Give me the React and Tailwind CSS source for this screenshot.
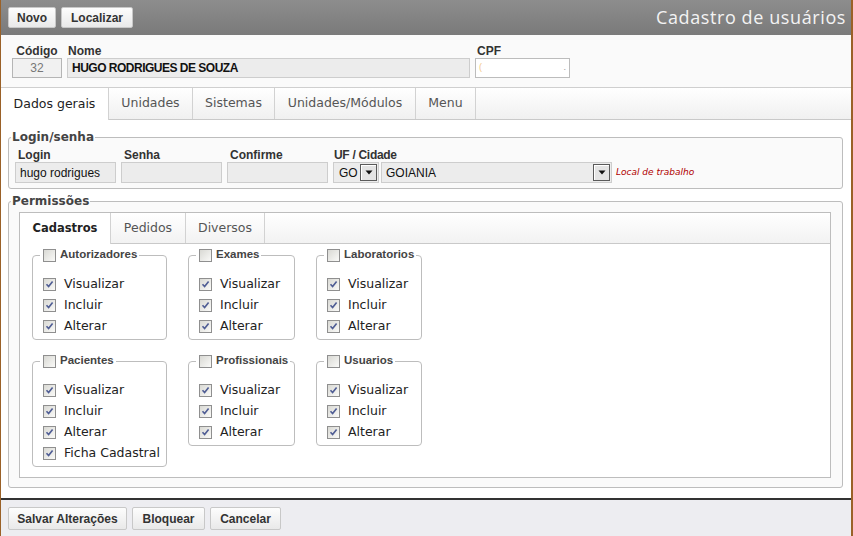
import React from "react";

const SANS = "font-['Liberation_Sans',Arial,sans-serif]";
const VERD = "font-['DejaVu_Sans',Verdana,sans-serif]";

function Box({ checked }) {
    return (
        <span className="flex h-[13px] w-[13px] shrink-0 items-center justify-center border border-[#8f8f8f] bg-gradient-to-br from-[#d9d9d4] to-[#fafaf8]">
            {checked && (
                <svg width="9" height="9" viewBox="0 0 9 9">
                    <path d="M1.5 4.2 L3.6 6.6 L7.6 1.4" stroke="#4f5d94" strokeWidth="1.6" fill="none" />
                </svg>
            )}
        </span>
    );
}

function Arrow() {
    return (
        <span className="flex h-[17px] w-[17px] shrink-0 items-center justify-center border border-[#5a5a5a] bg-[#e4e4e4] shadow-[inset_1px_1px_0_#fff]">
            <svg width="8" height="5" viewBox="0 0 8 5">
                <path d="M0.5 0.5 H7.5 L4 4.5 Z" fill="#111" />
            </svg>
        </span>
    );
}

function Btn({ children, w }) {
    return (
        <button
            className={`flex h-[21px] items-center justify-center rounded-[2px] border border-[#c8c8c8] bg-gradient-to-b from-[#fdfdfd] to-[#e9e9e9] text-[12px] font-bold text-[#333] ${SANS} ${w}`}
        >
            {children}
        </button>
    );
}

function Group({ title, items }) {
    return (
        <fieldset className="rounded-[4px] border border-[#bdbdbd] pb-[2px] pl-[7px]">
            <legend className="flex h-[14px] items-center gap-[4px] pl-[3px] pr-[2px]">
                <Box />
                <span className={`text-[11.5px] font-bold text-[#444] ${SANS}`}>{title}</span>
            </legend>
            <div className="mt-[12px] pl-[3px]">
                {items.map((it) => (
                    <div key={it} className="flex h-[21px] items-center gap-[8px]">
                        <Box checked />
                        <span className={`text-[12.5px] text-[#222] ${VERD}`}>{it}</span>
                    </div>
                ))}
            </div>
        </fieldset>
    );
}

const basic = ["Visualizar", "Incluir", "Alterar"];

export default function App() {
    const topTabs = [
        ["Dados gerais", "w-[108px]", true],
        ["Unidades", "w-[84px]"],
        ["Sistemas", "w-[82px]"],
        ["Unidades/Módulos", "w-[141px]"],
        ["Menu", "w-[60px]"],
    ];
    const permTabs = [
        ["Cadastros", "w-[91px]", true],
        ["Pedidos", "w-[75px]"],
        ["Diversos", "w-[79px]"],
    ];

    return (
        <div className={`flex h-[536px] w-[853px] flex-col overflow-hidden border-l border-r-2 border-[#9a6128] bg-white ${SANS}`}>
            {/* Header */}
            <div className="flex h-[35px] shrink-0 items-center gap-[5px] bg-gradient-to-b from-[#8d8d8d] to-[#7a7a7a] pl-[7px] pr-[5px]">
                <Btn w="w-[48px]">Novo</Btn>
                <Btn w="w-[72px]">Localizar</Btn>
                <span className="ml-auto font-['Open_Sans',sans-serif] text-[18px] tracking-[0.6px] text-[#f3f3f3]">
                    Cadastro de usuários
                </span>
            </div>

            {/* Identificação */}
            <div className="flex h-[53px] shrink-0 gap-[5px] border-b border-[#cfcfcf] bg-[#fafafa] pl-[11px] pt-[9px]">
                <div className="w-[50px]">
                    <div className="h-[14px] text-center text-[12px] font-bold leading-[14px] text-[#333]">Código</div>
                    <div className="flex h-[20px] items-center justify-center border border-[#b5b5b5] bg-[#f1f1f1] text-[12px] text-[#777]">
                        32
                    </div>
                </div>
                <div className="w-[403px]">
                    <div className="h-[14px] pl-[1px] text-[12px] font-bold leading-[14px] text-[#333]">Nome</div>
                    <div className="flex h-[20px] items-center border border-[#cdcdcd] bg-[#ececec] pl-[4px] text-[12px] font-bold tracking-[-0.5px] text-[#111]">
                        HUGO RODRIGUES DE SOUZA
                    </div>
                </div>
                <div className="w-[95px]">
                    <div className="h-[14px] pl-[2px] text-[12px] font-bold leading-[14px] text-[#333]">CPF</div>
                    <div className="flex h-[20px] items-center justify-between border border-[#bcbcbc] bg-white px-[3px] text-[9px]">
                        <span className="text-[#f3c98a]">(</span>
                        <span className="text-[#999]">.</span>
                    </div>
                </div>
            </div>

            {/* Abas principais */}
            <div className="flex h-[32px] shrink-0 border-b border-[#c9c9c9] bg-gradient-to-b from-white to-[#f0f0f0]">
                {topTabs.map(([label, w, active]) => (
                    <div
                        key={label}
                        className={`flex items-center justify-center border-r border-[#d2d2d2] text-[12.5px] ${VERD} ${w} ${
                            active ? "-mb-px bg-white text-[#222]" : "text-[#555]"
                        }`}
                    >
                        {label}
                    </div>
                ))}
            </div>

            {/* Conteúdo */}
            <div className="flex-1 bg-white pl-[7px] pr-[8px] pt-[10px]">
                <fieldset className="rounded-[3px] border border-[#bdbdbd] bg-[#fafafa] pb-[5px] pl-[2px]">
                    <legend className={`h-[14px] px-[1px] text-[12px] font-bold leading-[14px] text-[#444] ${VERD}`}>
                        Login/senha
                    </legend>
                    <div className="mt-[4px] flex items-end gap-[5px] pl-[4px]">
                        {["Login", "Senha", "Confirme"].map((l, i) => (
                            <div key={l} className="w-[101px]">
                                <div className="h-[14px] pl-[3px] text-[12px] font-bold leading-[14px] text-[#333]">{l}</div>
                                <div className="flex h-[21px] items-center border border-[#cdcdcd] bg-[#ececec] pl-[4px] text-[12px] text-[#111]">
                                    {i === 0 ? "hugo rodrigues" : ""}
                                </div>
                            </div>
                        ))}
                        <div>
                            <div className="h-[14px] pl-[1px] text-[12px] font-bold leading-[14px] tracking-[-0.3px] text-[#333]">
                                UF / Cidade
                            </div>
                            <div className="flex items-center gap-[2px]">
                                <div className="flex h-[21px] w-[46px] items-center justify-between border border-[#cdcdcd] bg-[#ececec] pl-[5px] pr-[1px] text-[12px] text-[#111]">
                                    GO
                                    <Arrow />
                                </div>
                                <div className="flex h-[21px] w-[231px] items-center justify-between border border-[#cdcdcd] bg-[#ececec] pl-[4px] pr-[1px] text-[12px] text-[#111]">
                                    GOIANIA
                                    <Arrow />
                                </div>
                                <span className={`ml-[2px] text-[9px] italic text-[#b00000] ${VERD}`}>Local de trabalho</span>
                            </div>
                        </div>
                    </div>
                </fieldset>

                <fieldset className="mt-[5px] rounded-[3px] border border-[#bdbdbd] bg-[#fafafa] pb-[9px] pl-[2px]">
                    <legend className={`h-[14px] px-[1px] text-[12px] font-bold leading-[14px] text-[#444] ${VERD}`}>
                        Permissões
                    </legend>
                    <div className="mt-[4px] pl-[8px] pr-[11px]">
                        <div className="border border-[#bdbdbd] bg-white">
                            <div className="flex h-[31px] border-b border-[#c9c9c9] bg-gradient-to-b from-white to-[#f2f2f2]">
                                {permTabs.map(([label, w, active]) => (
                                    <div
                                        key={label}
                                        className={`flex items-center justify-center border-r border-[#d2d2d2] ${VERD} ${w} ${
                                            active
                                                ? "-mb-px bg-white text-[11.5px] font-bold text-[#222]"
                                                : "text-[12.5px] text-[#555]"
                                        }`}
                                    >
                                        {label}
                                    </div>
                                ))}
                            </div>
                            <div className="grid grid-cols-[135px_107px_106px] items-start gap-x-[21px] gap-y-[14px] pb-[10px] pl-[12px] pt-[4px]">
                                <Group title="Autorizadores" items={basic} />
                                <Group title="Exames" items={basic} />
                                <Group title="Laboratorios" items={basic} />
                                <Group title="Pacientes" items={[...basic, "Ficha Cadastral"]} />
                                <Group title="Profissionais" items={basic} />
                                <Group title="Usuarios" items={basic} />
                            </div>
                        </div>
                    </div>
                </fieldset>
            </div>

            {/* Rodapé */}
            <div className="flex h-[38px] shrink-0 gap-[5px] border-t-2 border-[#333] bg-[#ededf1] pl-[7px] pt-[7px]">
                <Btn w="w-[119px] h-[23px]">Salvar Alterações</Btn>
                <Btn w="w-[73px] h-[23px]">Bloquear</Btn>
                <Btn w="w-[71px] h-[23px]">Cancelar</Btn>
            </div>
        </div>
    );
}
